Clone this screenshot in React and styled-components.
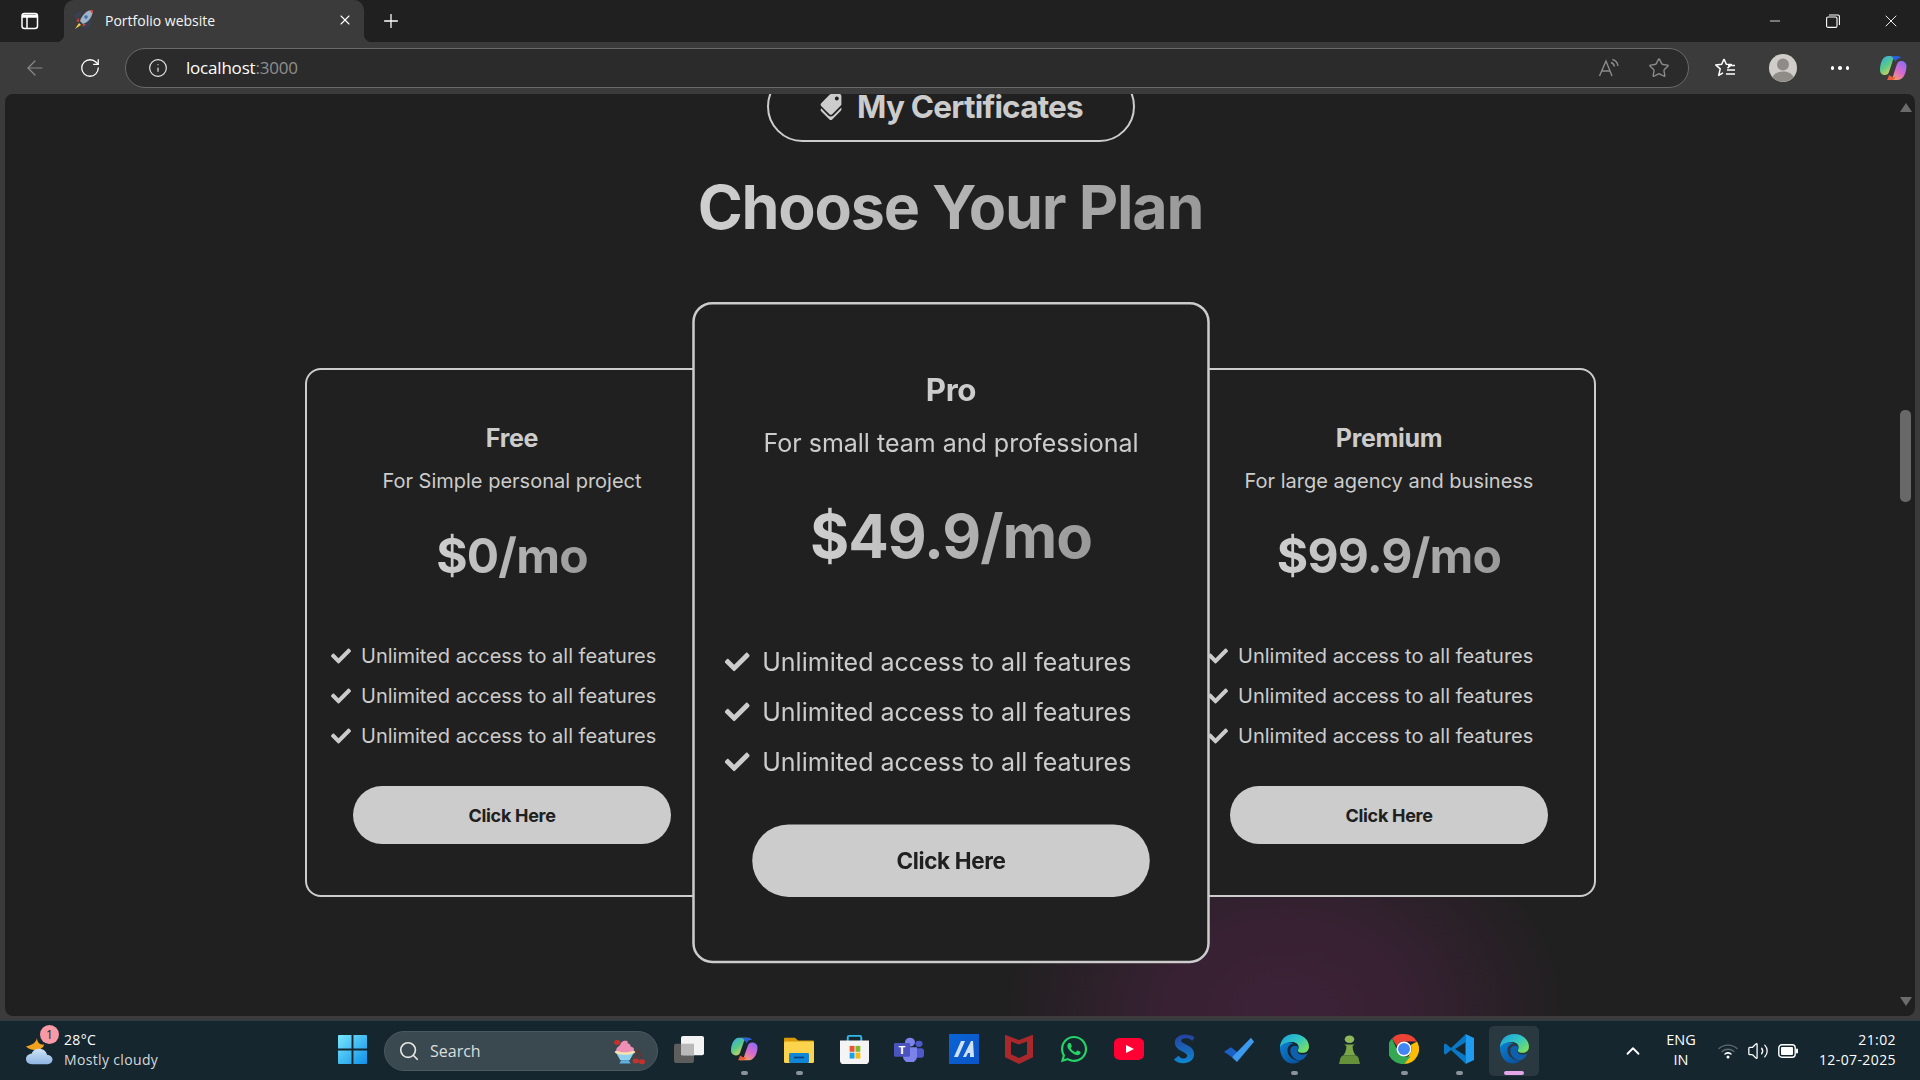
import React from 'react'
import styled, { createGlobalStyle } from 'styled-components'
import { FaCheck, FaTags, FaWhatsapp } from 'react-icons/fa'
import { Search, Plus, X, Minus, RotateCw, ArrowLeft, Info, Star, ChevronUp, Volume2 } from 'lucide-react'

const GlobalStyle = createGlobalStyle`
    html, body {
        margin: 0;
        padding: 0;
        background: #202020;
    }
    * {
        box-sizing: border-box;
    }
`

const plans = [
    { name: 'Free', text: 'For Simple personal project', price: '$0/mo' },
    { name: 'Pro', text: 'For small team and professional', price: '$49.9/mo', featured: true },
    { name: 'Premium', text: 'For large agency and business', price: '$99.9/mo' },
]

// browser chrome drawings
const SidebarIcon = () => (
    <svg width="18" height="18" viewBox="0 0 18 18" fill="none" stroke="#fff" strokeWidth="1.5">
        <rect x="1" y="1.5" width="15.5" height="15" rx="2.5" />
        <path d="M1 5h15.5M6 5v11.5" />
        <path d="M1.5 2.5h15v2.5h-15z" fill="#fff" stroke="none" />
    </svg>
)

const RocketIcon = () => (
    <svg width="20" height="22" viewBox="0 0 20 22">
        <path d="M1 6L9 1l-1 5-5 5zM12 15l7-6-2 8-6 4z" fill="#3b3f52" />
        <path d="M18 1c-5 1-9 5-11 11l3 3c6-2 9-7 10-13z" fill="#9fb4c8" />
        <path d="M18 1l2 .5-.5 3.5c-1-1.500-2-3-3-3.500z" fill="#d7453c" />
        <path d="M6 9l-3 3 3 1zM13 15l-3 3-.5-3z" fill="#c9403a" />
        <circle cx="13" cy="8" r="1.700" fill="#3c6ea8" />
        <path d="M6 14l2 2-6 4z" fill="#f3cf4b" />
    </svg>
)

const ReadAloudIcon = () => (
    <svg width="22" height="22" viewBox="0 0 22 22" fill="none" stroke="#8c8c8c" strokeWidth="1.400">
        <path d="M1.500 19L8 4l6 15M3.800 14h8.500" />
        <path d="M13 5.500c2 .5 3 2 3.500 4M14.500 2.500c3.200.8 5 3 5.500 6.500" />
    </svg>
)

const FavoritesIcon = () => (
    <svg width="22" height="22" viewBox="0 0 22 22" fill="none" stroke="#fff" strokeWidth="1.500">
        <path d="M10 2l2.300 5.300 5 .3-3.800 3.500M10 2L7.700 7.300l-6 .6 4.500 4-1.500 6.500 4.300-2.500" strokeLinejoin="round" />
        <path d="M14 8.500h7M13 13h8M12 17h9" />
    </svg>
)

const ProfileIcon = () => (
    <svg width="28" height="28" viewBox="0 0 28 28">
        <circle cx="14" cy="14" r="14" fill="#cfcdc9" />
        <circle cx="14" cy="10.500" r="6" fill="#8f8c88" />
        <path d="M3.500 23c2-4 6-5.500 10.500-5.500s8.500 1.500 10.500 5.500a14 14 0 0 1-21 0z" fill="#8f8c88" />
    </svg>
)

const CopilotIcon = ({ id, width = 28, height = 28 }) => (
    <svg width={width} height={height} viewBox="0 0 28 28" preserveAspectRatio="none">
        <defs>
            <linearGradient id={`${id}-a`} x1="0" y1="0" x2="0.700" y2="1">
                <stop offset="0" stopColor="#3aa5f0" />
                <stop offset="0.500" stopColor="#55c98b" />
                <stop offset="1" stopColor="#f3d54c" />
            </linearGradient>
            <linearGradient id={`${id}-b`} x1="0.800" y1="0" x2="0.200" y2="1">
                <stop offset="0" stopColor="#8a6ff0" />
                <stop offset="0.500" stopColor="#d86ad0" />
                <stop offset="1" stopColor="#f5a25a" />
            </linearGradient>
        </defs>
        <path d="M9 2h9c-3 1-4 3-5 7l-3 9c-.8 2-2 3-4 3-3 0-5-2-5-5 0-5 2-14 8-14z" fill={`url(#${id}-a)`} />
        <path d="M19 26h-9c3-1 4-3 5-7l3-9c.8-2 2-3 4-3 3 0 5.500 2 5.500 5 0 5-2.500 14-8.500 14z" fill={`url(#${id}-b)`} />
        <path d="M10 21c-.5 2-1 3.500-2 5h5c2 0 3-1 3-3-2 .5-4-.5-6-2z" fill="#ea5d3d" />
        <path d="M12 2h6c2 0 3 .5 4 2-3 0-4.500 1-5.500 4-1-2.500-2.500-4.500-4.500-6z" fill="#2a5fd8" />
    </svg>
)

// taskbar drawings
const WeatherIcon = () => (
    <svg width="32" height="30" viewBox="0 0 32 32" preserveAspectRatio="none">
        <defs>
            <linearGradient id="cloud" x1="0" y1="0" x2="0" y2="1">
                <stop offset="0" stopColor="#cfe3f6" />
                <stop offset="1" stopColor="#8fb5e3" />
            </linearGradient>
        </defs>
        <path d="M12 2c-1 4-3 7-11 9 3 4 9 5 14 3 2-1 4-3 4-5-3 1-7-2-7-7z" fill="#f0a21e" />
        <path d="M7 30c-4 0-6-2.500-6-5.500S3.500 19 6.500 19c1-3.500 4-5.500 7.500-5.500 4.500 0 7.500 3 8 6.500 3 .2 5.500 2.500 5.500 5s-2 5-5 5z" fill="url(#cloud)" />
    </svg>
)

const StartIcon = () => (
    <svg width="29" height="29" viewBox="0 0 30 30">
        <defs>
            <linearGradient id="win" x1="0" y1="0" x2="1" y2="1">
                <stop offset="0" stopColor="#78e8fb" />
                <stop offset="1" stopColor="#0f8fe9" />
            </linearGradient>
        </defs>
        <path d="M0 1a1 1 0 0 1 1-1h13v14H0zM16 0h13a1 1 0 0 1 1 1v13H16zM0 16h14v14H1a1 1 0 0 1-1-1zM16 16h14v13a1 1 0 0 1-1 1H16z" fill="url(#win)" />
    </svg>
)

const SundaeIcon = () => (
    <svg width="37" height="29" viewBox="0 0 36 36" preserveAspectRatio="none">
        <path d="M8 21h17l-4 9h-9z" fill="#8fd0ef" />
        <path d="M13 30h7l2 4H11z" fill="#5fb0df" />
        <ellipse cx="16.500" cy="20" rx="10" ry="3.500" fill="#f4e3b0" />
        <path d="M8 18c0-4 3-5 4-7 0-3 3-6 6-5 2 1 1 3 1 3 3 1 3 3 3 4 3 1 4 3 3 5-5 3-12 3-17 0z" fill="#ee8fb5" />
        <circle cx="9" cy="8" r="3" fill="#c9302c" />
        <circle cx="27" cy="31" r="3" fill="#c9302c" />
        <circle cx="33" cy="32" r="3" fill="#c9302c" />
        <path d="M27 28l3-10 3 11" fill="none" stroke="#7a2b20" strokeWidth="1" />
    </svg>
)

const TaskViewIcon = () => (
    <svg width="30" height="27" viewBox="0 0 30 28" preserveAspectRatio="none">
        <rect x="0" y="8" width="20" height="20" rx="2" fill="#5d5d5d" />
        <rect x="7" y="0" width="23" height="20" rx="2" fill="#f3f3f3" />
        <rect x="7" y="8" width="13" height="12" fill="#b9b9b9" />
    </svg>
)

const FolderIcon = () => (
    <svg width="30" height="27" viewBox="0 0 30 30" preserveAspectRatio="none">
        <path d="M0 3a1 1 0 0 1 1-1h10l3 3h15a1 1 0 0 1 1 1v5H0z" fill="#d99a06" />
        <rect y="6" width="30" height="24" rx="1.500" fill="#fcd34d" />
        <rect x="5" y="19" width="20" height="11" rx="1.500" fill="#1186d6" />
        <rect x="10" y="23" width="10" height="1.800" fill="#053f7d" />
    </svg>
)

const StoreIcon = () => (
    <svg width="29" height="29" viewBox="0 0 30 32" preserveAspectRatio="none">
        <path d="M8 7V2.500A1.500 1.500 0 0 1 9.500 1h11A1.500 1.500 0 0 1 22 2.500V7" fill="none" stroke="#2fb8e8" strokeWidth="2" />
        <path d="M0 6h30v22a4 4 0 0 1-4 4H4a4 4 0 0 1-4-4z" fill="#f4f4f4" />
        <rect x="10" y="12" width="5" height="6.500" fill="#e8542e" />
        <rect x="16" y="12" width="5" height="6.500" fill="#7eb82b" />
        <rect x="10" y="19.500" width="5" height="6.500" fill="#1a9fe8" />
        <rect x="16" y="19.500" width="5" height="6.500" fill="#fbb80d" />
    </svg>
)

const TeamsIcon = () => (
    <svg width="30" height="26" viewBox="0 0 30 30" preserveAspectRatio="none">
        <circle cx="25" cy="9" r="3.600" fill="#5059c9" />
        <rect x="21" y="14" width="9" height="11" rx="3" fill="#5059c9" />
        <circle cx="16" cy="7" r="5" fill="#7b83eb" />
        <path d="M9 13h14v11a7 7 0 0 1-14 0z" fill="#7b83eb" />
        <rect x="0" y="8" width="16" height="16" rx="1.500" fill="#4b53bc" />
        <text x="8" y="20.500" fontSize="12" fontWeight="700" textAnchor="middle" fill="#fff" fontFamily="Open Sans, sans-serif">T</text>
    </svg>
)

const MaIcon = () => (
    <svg width="30" height="30" viewBox="0 0 30 30">
        <defs>
            <linearGradient id="ma" x1="0" y1="0" x2="1" y2="1">
                <stop offset="0" stopColor="#0b63d6" />
                <stop offset="1" stopColor="#0a55c5" />
            </linearGradient>
        </defs>
        <rect width="30" height="30" fill="url(#ma)" />
        <path d="M5 23l7-16h4l-7 16zM14 23l8-16h2l1 16h-4v-4h-2l-2 4z" fill="#cfe0f7" />
    </svg>
)

const McafeeIcon = () => (
    <svg width="28" height="30" viewBox="0 0 28 40" preserveAspectRatio="none">
        <path d="M0 1l14 7 14-7v30L14 40 0 31zM6 10v17l8 5 8-5V10l-8 4z" fill="#a8282c" fillRule="evenodd" />
    </svg>
)

const YoutubeIcon = () => (
    <svg width="30" height="22" viewBox="0 0 30 28" preserveAspectRatio="none">
        <rect width="30" height="28" rx="6" fill="#ff0033" />
        <path d="M12 9l8 5-8 5z" fill="#fff" />
    </svg>
)

const SkypeLikeIcon = () => (
    <svg width="22" height="30" viewBox="0 0 24 40" preserveAspectRatio="none">
        <defs>
            <linearGradient id="ess" x1="0" y1="0" x2="0" y2="1">
                <stop offset="0" stopColor="#26409c" />
                <stop offset="1" stopColor="#0d87d2" />
            </linearGradient>
        </defs>
        <path d="M21 9C19 6 16 5.500 13.500 5.500 11 5.500 9 7 9 9c0 5 14 5 14 18 0 7-5 12-12 12-4 0-8-2-10-5l5-5c1.500 2 3 3.500 5.500 3.500 2.300 0 4-1.500 4-3.500C15.500 23.500 2 23 2 11 2 5 7 .5 13.500.5c4.500 0 8 1.500 10 4z" fill="url(#ess)" />
    </svg>
)

const TodoIcon = () => (
    <svg width="30" height="25" viewBox="0 0 30 32" preserveAspectRatio="none">
        <path d="M0 19l7-6 7 7-6 6z" fill="#1b60c4" />
        <path d="M8 26L27 1l3 5-17 26z" fill="#3d9bef" />
    </svg>
)

const EdgeIcon = ({ id, size = 30 }) => (
    <svg width={size} height={size} viewBox="0 0 32 32">
        <defs>
            <linearGradient id={`${id}-top`} x1="0" y1="0" x2="1" y2="0.800">
                <stop offset="0" stopColor="#1b9de2" />
                <stop offset="0.550" stopColor="#33c6c0" />
                <stop offset="1" stopColor="#7ee05c" />
            </linearGradient>
            <linearGradient id={`${id}-low`} x1="0" y1="0" x2="1" y2="1">
                <stop offset="0" stopColor="#0c7fd0" />
                <stop offset="1" stopColor="#0a4c98" />
            </linearGradient>
        </defs>
        <path d="M1 15C1 6 7.500 0 16 0c9 0 16 6 16 13.500 0 4-3 6.500-7 6.500-3 0-5-1-5-2.500 0-1 1-1.500 1-3.500 0-3-3-5.500-7-5.500-6 0-10 4-13 6.500z" fill={`url(#${id}-top)`} />
        <path d="M1 14c2-3 6-5 10-5 3 0 4.500 1 5 1.500-3-.5-7 2-7 7 0 6 6 11 14 11-2.500 1.800-5 3-8 3C7 31.500 1 24 1 14z" fill={`url(#${id}-low)`} />
        <path d="M12 17.500c0-3 2.500-5 5-5 2 0 3.500 1 3.500 2 0 1.500-1 2-1 3.500 0 2.500 3 4 6 4 2 0 3.500-.5 5-1.500-2 4.500-5 7-7.500 7.500-6 .5-11-5-11-10.500z" fill="#0e5fae" />
    </svg>
)

const ChessIcon = () => (
    <svg width="21" height="29" viewBox="0 0 20 34" preserveAspectRatio="none">
        <circle cx="10" cy="5" r="4.500" fill="#8fb85a" />
        <path d="M5 11h10l-2 2c0 5 1 8 3 11H4c2-3 3-6 3-11z" fill="#7aa548" />
        <path d="M1 29c0-3 2-5 3-5h12c1 0 3 2 3 5l1 5H0z" fill="#65913a" />
    </svg>
)

const ChromeIcon = () => (
    <svg width="30" height="30" viewBox="0 0 30 30">
        <path d="M15 0a15 15 0 0 1 13 7.500H15a7.500 7.500 0 0 0-7 4.800L3 4.500A15 15 0 0 1 15 0z" fill="#ea4335" />
        <path d="M28 7.500A15 15 0 0 1 15 30l6.500-11.250A7.500 7.500 0 0 0 21.500 11z" fill="#fbbc05" />
        <path d="M15 30A15 15 0 0 1 3 4.500l6.500 14.300A7.500 7.500 0 0 0 15 22.500h6.500z" fill="#34a853" />
        <circle cx="15" cy="15" r="7.500" fill="#fff" />
        <circle cx="15" cy="15" r="6" fill="#4285f4" />
    </svg>
)

const VscodeIcon = () => (
    <svg width="30" height="30" viewBox="0 0 30 30">
        <path d="M21.500 0L30 4v22l-8.500 4z" fill="#1f9cf0" />
        <path d="M22 0L7 14 1.500 9.500 0 10.500v9L1.500 20.500 7 16l15 14v-8L11 15l11-7z" fill="#0a78c4" />
    </svg>
)

const WifiIcon = () => (
    <svg width="20" height="16" viewBox="0 0 20 16" fill="none" strokeLinecap="round">
        <path d="M1 5.500c5-4.500 13-4.500 18 0" stroke="#5f6b72" strokeWidth="1.300" />
        <path d="M4 8.500c3.500-3 8.500-3 12 0" stroke="#5f6b72" strokeWidth="1.300" />
        <path d="M7 11c2-1.500 4-1.500 6 0" stroke="#fff" strokeWidth="1.500" />
        <circle cx="10" cy="14" r="1.500" fill="#fff" />
    </svg>
)

const BatteryIcon = () => (
    <svg width="20" height="14" viewBox="0 0 20 14">
        <rect x="0.800" y="0.800" width="16.400" height="12.400" rx="3" fill="none" stroke="#fff" strokeWidth="1.400" />
        <rect x="3" y="3" width="12" height="8" rx="1" fill="#fff" />
        <rect x="18" y="4.500" width="2" height="5" rx="1" fill="#fff" />
    </svg>
)

const taskbarApps = [
    { key: 'task', icon: <TaskViewIcon /> },
    { key: 'copilot', icon: <CopilotIcon id="tb-copilot" width={28} height={26} />, running: true },
    { key: 'files', icon: <FolderIcon />, running: true },
    { key: 'store', icon: <StoreIcon /> },
    { key: 'teams', icon: <TeamsIcon /> },
    { key: 'ma', icon: <MaIcon /> },
    { key: 'mcafee', icon: <McafeeIcon /> },
    { key: 'whatsapp', icon: <FaWhatsapp size={30} color="#25d366" /> },
    { key: 'youtube', icon: <YoutubeIcon /> },
    { key: 's', icon: <SkypeLikeIcon /> },
    { key: 'todo', icon: <TodoIcon /> },
    { key: 'edge-a', icon: <EdgeIcon id="edge-a" />, running: true },
    { key: 'chess', icon: <ChessIcon /> },
    { key: 'chrome', icon: <ChromeIcon />, running: true },
    { key: 'vscode', icon: <VscodeIcon />, running: true },
]

const App = () => {
    return (
        <Screen>
            <GlobalStyle />
            <TabStrip>
                <SidebarButton><SidebarIcon /></SidebarButton>
                <Tab>
                    <RocketIcon />
                    <TabTitle>Portfolio website</TabTitle>
                    <X size={16} color="#fff" strokeWidth={1.6} />
                </Tab>
                <NewTab><Plus size={22} color="#fff" strokeWidth={1.4} /></NewTab>
                <WindowButtons>
                    <WindowButton><Minus size={16} color="#fff" strokeWidth={1.2} /></WindowButton>
                    <WindowButton>
                        <svg width="14" height="14" viewBox="0 0 14 14" fill="none" stroke="#fff" strokeWidth="1.100">
                            <rect x="0.600" y="3" width="10.400" height="10.400" rx="1.500" />
                            <path d="M3 1h9a1.500 1.500 0 0 1 1.400 1.500V11" />
                        </svg>
                    </WindowButton>
                    <WindowButton><X size={20} color="#fff" strokeWidth={1.1} /></WindowButton>
                </WindowButtons>
            </TabStrip>

            <Toolbar>
                <NavButton><ArrowLeft size={24} color="#8a8a8a" strokeWidth={1.2} /></NavButton>
                <NavButton><RotateCw size={22} color="#fff" strokeWidth={1.4} /></NavButton>
                <AddressBar>
                    <Info size={20} color="#e8e8e8" strokeWidth={1.4} />
                    <Url>localhost<span>:3000</span></Url>
                    <AddressActions>
                        <ReadAloudIcon />
                        <Star size={22} color="#8c8c8c" strokeWidth={1.5} />
                    </AddressActions>
                </AddressBar>
                <ToolbarEnd>
                    <FavoritesIcon />
                    <ProfileIcon />
                    <Dots><i /><i /><i /></Dots>
                    <CopilotIcon id="bar-copilot" />
                </ToolbarEnd>
            </Toolbar>

            <Frame>
                <Viewport>
                    <Glow />
                    <Page>
                        <CertButton><CertIcon><FaTags size={26} /></CertIcon>My Certificates</CertButton>
                        <Heading>Choose Your Plan</Heading>
                        <Plans>
                            {plans.map((plan) => (
                                <Card key={plan.name} $featured={plan.featured}>
                                    <PlanName>{plan.name}</PlanName>
                                    <PlanText>{plan.text}</PlanText>
                                    <Price>{plan.price}</Price>
                                    <Features>
                                        {[0, 1, 2].map((n) => (
                                            <li key={n}><FaCheck size={20} /> Unlimited access to all features</li>
                                        ))}
                                    </Features>
                                    <CardButton>Click Here</CardButton>
                                </Card>
                            ))}
                        </Plans>
                    </Page>
                    <Scrollbar>
                        <ScrollArrow />
                        <ScrollThumb />
                        <ScrollArrow $down />
                    </Scrollbar>
                </Viewport>
            </Frame>

            <Taskbar>
                <Weather>
                    <WeatherIcon />
                    <Badge>1</Badge>
                    <WeatherText>
                        <span>28°C</span>
                        <small>Mostly cloudy</small>
                    </WeatherText>
                </Weather>
                <AppSlot $after={7}><StartIcon /></AppSlot>
                <SearchBox>
                    <Search size={22} color="#e6e6e6" strokeWidth={1.8} />
                    <span>Search</span>
                    <SundaeIcon />
                </SearchBox>
                <Apps>
                    {taskbarApps.map((app) => (
                        <AppSlot key={app.key} $running={app.running}>{app.icon}</AppSlot>
                    ))}
                    <AppSlot $active><EdgeIcon id="edge-b" /></AppSlot>
                </Apps>
                <Tray>
                    <TrayChevron><ChevronUp size={22} color="#fff" strokeWidth={2} /></TrayChevron>
                    <Lang><span>ENG</span><span>IN</span></Lang>
                    <TrayIcon><WifiIcon /></TrayIcon>
                    <TrayIcon><Volume2 size={22} color="#fff" strokeWidth={1.4} /></TrayIcon>
                    <TrayIcon><BatteryIcon /></TrayIcon>
                    <Clock><span>21:02</span><span>12-07-2025</span></Clock>
                </Tray>
            </Taskbar>
        </Screen>
    )
}

//styled components
const Screen = styled.div`
    width: 1920px;
    height: 1080px;
    display: flex;
    flex-direction: column;
    overflow: hidden;
    font-family: "Open Sans", "Noto Sans", sans-serif;
    color: #fff;
    background: #3b3b3b;
`

const TabStrip = styled.div`
    height: 42px;
    flex: none;
    display: flex;
    align-items: center;
    background: #202020;
`

const SidebarButton = styled.div`
    width: 60px;
    margin-right: 4px;
    display: flex;
    justify-content: center;
`

const Tab = styled.div`
    position: relative;
    width: 300px;
    height: 42px;
    display: flex;
    align-items: center;
    padding: 0 11px 2px 9px;
    background: #3b3b3b;
    border-radius: 10px 10px 0 0;

    &::before, &::after {
        content: '';
        position: absolute;
        bottom: 0;
        width: 8px;
        height: 8px;
    }
    &::before {
        left: -8px;
        background: radial-gradient(circle at 0 0, transparent 8px, #3b3b3b 8.5px);
    }
    &::after {
        right: -8px;
        background: radial-gradient(circle at 100% 0, transparent 8px, #3b3b3b 8.5px);
    }
`

const TabTitle = styled.span`
    flex: 1;
    margin-left: 12px;
    font-size: 14px;
    color: #f5f5f5;
`

const NewTab = styled.div`
    width: 54px;
    display: flex;
    justify-content: center;
`

const WindowButtons = styled.div`
    margin-left: auto;
    padding-right: 0;
    display: grid;
    grid-template-columns: repeat(3, 58px);
`

const WindowButton = styled.div`
    display: flex;
    justify-content: center;
    align-items: center;
`

const Toolbar = styled.div`
    height: 52px;
    flex: none;
    display: flex;
    align-items: center;
    padding-left: 15px;
`

const NavButton = styled.div`
    width: 40px;
    margin-right: 15px;
    display: flex;
    justify-content: center;
`

const AddressBar = styled.div`
    width: 1564px;
    height: 40px;
    display: flex;
    align-items: center;
    padding: 0 18px 0 22px;
    background: #2b2b2b;
    border: 1.5px solid #6a6a6a;
    border-radius: 20px;
`

const Url = styled.div`
    margin-left: 18px;
    margin-bottom: 2px;
    font-size: 17px;
    letter-spacing: -0.2px;
    color: #fff;

    span {
        color: #8f8f8f;
    }
`

const AddressActions = styled.div`
    margin-left: auto;
    display: flex;
    align-items: center;
    gap: 28px;
`

const ToolbarEnd = styled.div`
    margin-left: 8px;
    display: grid;
    grid-template-columns: 56px 60px 54px 52px;
    justify-items: center;
    align-items: center;
`

const Dots = styled.div`
    display: flex;
    gap: 4px;

    i {
        width: 3.500px;
        height: 3.500px;
        border-radius: 50%;
        background: #fff;
    }
`

const Frame = styled.div`
    flex: 1;
    min-height: 0;
    padding: 0 5px 4px;
`

const Viewport = styled.div`
    position: relative;
    height: 100%;
    overflow: hidden;
    display: flex;
    background: #202020;
    border-radius: 8px;
`

const Glow = styled.div`
    position: absolute;
    left: 995px;
    top: 700px;
    width: 570px;
    height: 440px;
    background: radial-gradient(closest-side, #3d2237 0%, #382133 40%, rgba(58, 34, 53, 0) 100%);
`

const Page = styled.main`
    position: relative;
    flex: 1;
    min-width: 0;
    display: flex;
    flex-direction: column;
    align-items: center;
    font-family: Inter, "Noto Sans", sans-serif;
`

const CertButton = styled.div`
    width: 368px;
    height: 71px;
    margin-top: -23px;
    padding-top: 1px;
    flex: none;
    display: flex;
    align-items: center;
    justify-content: center;
    gap: 13px;
    font-size: 31.5px;
    line-height: 24px;
    font-weight: 700;
    letter-spacing: -0.8px;
    color: #cccccc;
    border: 2px solid #cccccc;
    border-radius: 50px;
`

const CertIcon = styled.span`
    display: flex;
    transform: rotate(90deg);
`

const Heading = styled.h1`
    margin: 27px 0 0;
    font-size: 61px;
    line-height: 76px;
    font-weight: 700;
    letter-spacing: -1.2px;
    background: linear-gradient(90deg, #cfcfcf, #999999);
    -webkit-background-clip: text;
    background-clip: text;
    color: transparent;
`

const Plans = styled.section`
    margin-top: 123px;
    display: grid;
    grid-template-columns: repeat(3, 414px);
    gap: 24.5px;
`

const Card = styled.article`
    position: relative;
    z-index: ${(p) => (p.$featured ? 2 : 1)};
    height: 529px;
    padding: 52px 24px 0;
    display: flex;
    flex-direction: column;
    align-items: center;
    background: #202020;
    border: 2px solid #cccccc;
    border-radius: 16px;
    transform: ${(p) => (p.$featured ? 'scale(1.25)' : 'none')};
`

const PlanName = styled.h3`
    margin: 1px 0 -1px;
    font-size: 25px;
    line-height: 30px;
    font-weight: 700;
    letter-spacing: -0.3px;
    color: #cccccc;
`

const PlanText = styled.p`
    margin: 15px 0 0;
    font-size: 20px;
    line-height: 28px;
    letter-spacing: 0;
    white-space: nowrap;
    color: #cccccc;
`

const Price = styled.div`
    margin-top: 31px;
    font-size: 48px;
    line-height: 60px;
    font-weight: 700;
    letter-spacing: -0.8px;
    background: linear-gradient(90deg, #cfcfcf, #999999);
    -webkit-background-clip: text;
    background-clip: text;
    color: transparent;
`

const Features = styled.ul`
    list-style: none;
    width: 100%;
    margin: 56px 0 0;
    padding: 0;
    display: flex;
    flex-direction: column;
    gap: 12px;
    font-size: 20px;
    line-height: 28px;
    letter-spacing: 0;
    color: #cccccc;

    li {
        display: flex;
        align-items: center;
        gap: 10px;
        white-space: nowrap;
    }
`

const CardButton = styled.button`
    width: 318px;
    height: 58px;
    margin-top: 36px;
    flex: none;
    font-family: inherit;
    font-size: 18px;
    font-weight: 700;
    letter-spacing: -0.3px;
    color: #202020;
    background: #cccccc;
    border: none;
    border-radius: 50px;
`

const Scrollbar = styled.div`
    position: relative;
    width: 19px;
    flex: none;
    padding: 9px 0 10px;
    display: flex;
    flex-direction: column;
    justify-content: space-between;
    align-items: center;
    background: transparent;
`

const ScrollArrow = styled.div`
    width: 0;
    height: 0;
    border-left: 6.500px solid transparent;
    border-right: 6.500px solid transparent;
    border-bottom: ${(p) => (p.$down ? 'none' : '9px solid #6b6b6b')};
    border-top: ${(p) => (p.$down ? '9px solid #6b6b6b' : 'none')};
`

const ScrollThumb = styled.div`
    position: absolute;
    top: 316px;
    left: 4px;
    width: 11px;
    height: 92px;
    background: #686868;
    border-radius: 5px;
`

const Taskbar = styled.footer`
    height: 60px;
    flex: none;
    display: flex;
    align-items: center;
    padding: 0 24px 0 25px;
    background: #16262f;
    border-top: 1px solid #2e3b43;
`

const Weather = styled.div`
    position: relative;
    width: 302px;
    display: flex;
    align-items: center;
    gap: 7px;
`

const Badge = styled.span`
    position: absolute;
    left: 15px;
    top: -5px;
    width: 19px;
    height: 19px;
    display: flex;
    align-items: center;
    justify-content: center;
    font-size: 12px;
    color: #222;
    background: #f79aa5;
    border-radius: 50%;
`

const WeatherText = styled.div`
    display: flex;
    flex-direction: column;
    margin-bottom: 2px;
    font-size: 14px;
    line-height: 20px;
    letter-spacing: 0.35px;

    small {
        font-size: 14px;
        color: #d4d9dc;
    }
`

const AppSlot = styled.div`
    position: relative;
    width: 50px;
    height: 50px;
    flex: none;
    margin-right: ${(p) => p.$after || 0}px;
    padding-bottom: 3px;
    display: flex;
    align-items: center;
    justify-content: center;
    background: ${(p) => (p.$active ? '#2a3840' : 'transparent')};
    border-radius: 5px;

    &::after {
        content: '';
        display: ${(p) => (p.$running || p.$active ? 'block' : 'none')};
        position: absolute;
        bottom: 1px;
        left: 50%;
        width: ${(p) => (p.$active ? 20 : 7)}px;
        height: 4px;
        margin-left: ${(p) => (p.$active ? -10 : -3.5)}px;
        background: ${(p) => (p.$active ? '#e3a6e8' : '#8a9399')};
        border-radius: 2px;
    }
`

const SearchBox = styled.div`
    width: 274px;
    height: 40px;
    flex: none;
    margin-right: 6px;
    display: flex;
    align-items: center;
    padding: 0 12px 0 13px;
    background: #3a4950;
    border: 1px solid #4a585f;
    border-radius: 20px;

    span {
        flex: 1;
        margin-left: 10px;
        font-size: 16px;
        color: #d9dddf;
    }
`

const Apps = styled.div`
    display: flex;
    gap: 5px;
`

const Tray = styled.div`
    margin-left: auto;
    display: flex;
    align-items: center;
`

const TrayChevron = styled.div`
    width: 24px;
    display: flex;
    justify-content: center;
`

const Lang = styled.div`
    width: 48px;
    margin: 0 8px 2px 12px;
    display: flex;
    flex-direction: column;
    align-items: center;
    font-size: 14.5px;
    line-height: 20px;
`

const TrayIcon = styled.div`
    width: 30px;
    display: flex;
    justify-content: center;
`

const Clock = styled.div`
    width: 93px;
    margin-bottom: 2px;
    display: flex;
    flex-direction: column;
    align-items: flex-end;
    font-size: 14px;
    line-height: 20px;
    letter-spacing: 0.4px;
    white-space: nowrap;
`

export default App
